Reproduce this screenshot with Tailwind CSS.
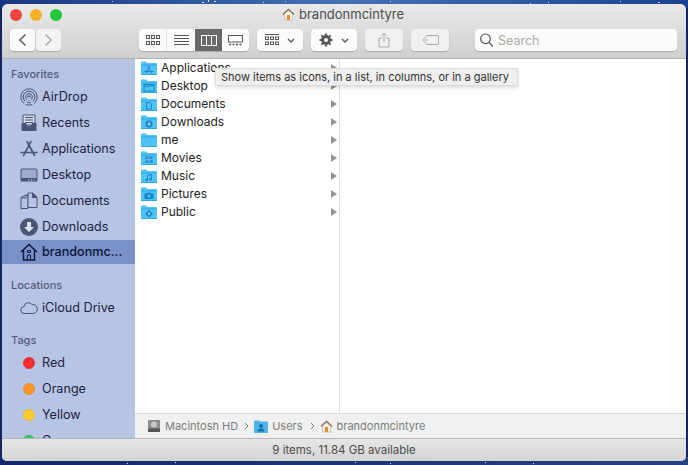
<!DOCTYPE html>
<html lang="en">
<head>
    <meta charset="UTF-8">
    <title>brandonmcintyre</title>
    <script src="https://cdn.jsdelivr.net/npm/@tailwindcss/browser@4"></script>
</head>
<body class="relative w-[688px] h-[465px] overflow-hidden bg-[#13265f] pt-[4px] px-[2px] font-['Inter','Liberation_Sans',sans-serif]">

    <!-- wallpaper showing round the window -->
    <div class="absolute left-0 top-0 w-full h-[8px] bg-gradient-to-r from-[#1a3580] via-[#4573b2] to-[#1c3f92]"></div>
    <div class="absolute left-0 bottom-0 w-full h-[8px] bg-gradient-to-r from-[#13286a] to-[#25427f]"></div>
    <svg class="absolute left-0 top-0" width="688" height="465" viewBox="0 0 688 465" fill="#dfe8f8">
        <rect x="112" y="1" width="1" height="1"/><rect x="202" y="2" width="2" height="1"/><rect x="208" y="0" width="1" height="2"/><rect x="214" y="1" width="2" height="1"/><rect x="263" y="2" width="1" height="1"/><rect x="285" y="1" width="1" height="1"/><rect x="390" y="1" width="1" height="1"/><rect x="530" y="3" width="1" height="1"/><rect x="548" y="2" width="1" height="1"/><rect x="620" y="1" width="1" height="1"/><rect x="658" y="2" width="2" height="1"/>
        <rect x="127" y="463" width="1" height="1"/><rect x="175" y="462" width="1" height="1"/><rect x="355" y="462" width="1" height="1"/><rect x="390" y="463" width="1" height="1"/><rect x="485" y="462" width="1" height="1"/><rect x="533" y="463" width="1" height="1"/>
    </svg>

    <!-- finder window -->
    <main class="relative w-[684px] h-[457px] rounded-t-[6px] rounded-b-[5px] overflow-hidden flex flex-col bg-white">

        <!-- title + toolbar -->
        <header class="h-[55px] shrink-0 bg-gradient-to-b from-[#e9e9e9] to-[#d0d0d0] border-b border-[#b1b1b1] px-[8px]">
            <div class="h-[22px] flex items-center relative">
                <div class="flex gap-[8px]">
                    <span class="w-[12px] h-[12px] rounded-full bg-[#f2453f]"></span>
                    <span class="w-[12px] h-[12px] rounded-full bg-[#f6b226]"></span>
                    <span class="w-[12px] h-[12px] rounded-full bg-[#22c93a]"></span>
                </div>
                <div class="absolute left-[272px] top-[1px] flex items-center gap-[4px] text-[13px] text-[#4d4d4d]">
                    <svg width="13" height="13" viewBox="0 0 13 13"><path d="M1 6.500 6.500 1.500 12 6.500" fill="none" stroke="#8a6a4a" stroke-width="1.400"/><path d="M2.500 6 6.500 2.600 10.500 6V12H2.500Z" fill="#f4f1ec" stroke="#a9a49c" stroke-width=".5"/><rect x="5" y="7" width="3" height="5" fill="#ef8a1d"/></svg>
                    <span>brandonmcintyre</span>
                </div>
            </div>
            <div class="mt-[3px] h-[22px] flex text-[#4b4b4b]">
                <div class="flex gap-[1px]">
                    <button class="w-[25px] h-[22px] rounded-[4px] bg-[#fbfbfb] shadow-[0_1px_1px_#0003] flex items-center justify-center">
                        <svg width="9" height="14" viewBox="0 0 9 14"><path d="M7.500 1.500 1.800 7l5.700 5.500" fill="none" stroke="#555" stroke-width="1.400"/></svg>
                    </button>
                    <button class="w-[25px] h-[22px] rounded-[4px] bg-[#f3f3f3] shadow-[0_1px_1px_#0003] flex items-center justify-center">
                        <svg width="9" height="14" viewBox="0 0 9 14"><path d="M1.500 1.500 7.200 7l-5.700 5.500" fill="none" stroke="#aaa" stroke-width="1.400"/></svg>
                    </button>
                </div>
                <div class="ml-[78px] flex w-[110px] h-[22px] rounded-[4px] overflow-hidden bg-[#fbfbfb] shadow-[0_1px_1px_#0003]">
                    <div class="w-[28px] flex items-center justify-center border-r border-[#e2e2e2]">
                        <svg width="14" height="10" viewBox="0 0 14 10" fill="none" stroke="#555"><rect x=".5" y=".5" width="3" height="3"/><rect x="5.500" y=".5" width="3" height="3"/><rect x="10.500" y=".5" width="3" height="3"/><rect x=".5" y="6.500" width="3" height="3"/><rect x="5.500" y="6.500" width="3" height="3"/><rect x="10.500" y="6.500" width="3" height="3"/></svg>
                    </div>
                    <div class="w-[28px] flex items-center justify-center">
                        <svg width="15" height="11" viewBox="0 0 15 11" stroke="#555"><path d="M0 .5h15M0 3.500h15M0 6.500h15M0 9.500h15"/></svg>
                    </div>
                    <div class="w-[27px] flex items-center justify-center bg-[#696969]">
                        <svg width="16" height="11" viewBox="0 0 16 11" fill="none" stroke="#fff"><rect x=".5" y=".5" width="15" height="10"/><path d="M5.500 0v11M10.500 0v11"/></svg>
                    </div>
                    <div class="w-[27px] flex items-center justify-center">
                        <svg width="15" height="11" viewBox="0 0 15 11" fill="none" stroke="#555"><rect x=".5" y=".5" width="14" height="6.500"/><path d="M1 9.500h2M4.500 9.500h2M8 9.500h2M11.500 9.500h2" stroke-width="1.400"/></svg>
                    </div>
                </div>
                <button class="ml-[8px] w-[46px] h-[22px] rounded-[4px] bg-[#fbfbfb] shadow-[0_1px_1px_#0003] flex items-center justify-center gap-[8px]">
                    <svg width="14" height="12" viewBox="0 0 14 12" fill="none" stroke="#555"><path d="M0 .5h14"/><rect x=".5" y="3" width="3" height="2.500"/><rect x="5.500" y="3" width="3" height="2.500"/><rect x="10.500" y="3" width="3" height="2.500"/><rect x=".5" y="8" width="3" height="2.500"/><rect x="5.500" y="8" width="3" height="2.500"/><rect x="10.500" y="8" width="3" height="2.500"/></svg>
                    <svg width="8" height="5" viewBox="0 0 8 5"><path d="M1 1l3 3 3-3" fill="none" stroke="#555" stroke-width="1.300"/></svg>
                </button>
                <button class="ml-[8px] w-[46px] h-[22px] rounded-[4px] bg-[#fbfbfb] shadow-[0_1px_1px_#0003] flex items-center justify-center gap-[8px]">
                    <svg width="14" height="14" viewBox="0 0 14 14"><circle cx="7" cy="7" r="3.600" fill="none" stroke="#555" stroke-width="2.600"/><path d="M7 .5v13M.5 7h13M2.400 2.400l9.200 9.200M11.600 2.400l-9.200 9.200" stroke="#555" stroke-width="2"/><circle cx="7" cy="7" r="2" fill="#fbfbfb"/></svg>
                    <svg width="8" height="5" viewBox="0 0 8 5"><path d="M1 1l3 3 3-3" fill="none" stroke="#555" stroke-width="1.300"/></svg>
                </button>
                <button class="ml-[8px] w-[38px] h-[22px] rounded-[4px] bg-[#f1f1f1] shadow-[0_1px_1px_#0003] flex items-center justify-center">
                    <svg width="12" height="16" viewBox="0 0 12 16" fill="none" stroke="#a8a8a8"><path d="M6 10V1M3.500 3.500 6 1l2.500 2.500M4 6H1v9h10V6H8"/></svg>
                </button>
                <button class="ml-[8px] w-[38px] h-[22px] rounded-[4px] bg-[#f1f1f1] shadow-[0_1px_1px_#0003] flex items-center justify-center">
                    <svg width="17" height="10" viewBox="0 0 17 10" fill="none" stroke="#a8a8a8"><path d="M5 .5h10.500a1 1 0 0 1 1 1v7a1 1 0 0 1-1 1H5L.8 5Z"/><circle cx="4.500" cy="5" r=".6"/></svg>
                </button>
                <div class="ml-[26px] w-[202px] h-[22px] rounded-[4px] bg-[#fbfbfb] shadow-[0_1px_1px_#0003] flex items-center pl-[5px] gap-[5px] text-[12.500px] text-[#a9a9a9]">
                    <svg width="13" height="14" viewBox="0 0 13 14" fill="none" stroke="#555" stroke-width="1.200"><circle cx="5.500" cy="5.800" r="4.800"/><path d="M9 9.200 12.800 13.500"/></svg>
                    <span class="pt-[2px]">Search</span>
                </div>
            </div>
        </header>

        <div class="flex-1 min-h-0 flex">
            <!-- sidebar -->
            <aside class="w-[133px] shrink-0 bg-[#b8c4e3] text-[12.600px] text-[#1a2342] overflow-hidden relative">
                <h2 class="mt-[8px] ml-[9px] h-[14px] leading-[14px] text-[11px] font-medium text-[#525c7d]">Favorites</h2>
                <ul class="mt-[3px]">
                    <li class="h-[26px] flex items-center pl-[18px] gap-[4px]">
                        <svg class="w-[18px] h-[18px]" viewBox="0 0 18 18" fill="none" stroke="#4a5474"><circle cx="9" cy="9" r="8.200"/><circle cx="9" cy="9" r="5.800"/><circle cx="9" cy="9" r="3.400"/><circle cx="9" cy="9" r="1.200" fill="#4a5474"/><path d="M4 17 9 10l5 7" stroke="#b8c4e3" stroke-width="2"/></svg>
                        <span>AirDrop</span>
                    </li>
                    <li class="h-[26px] flex items-center pl-[18px] gap-[4px]">
                        <svg class="w-[18px] h-[18px]" viewBox="0 0 18 18"><path d="M3 1h12v10H3Z" fill="#d5daea" stroke="#4a5474"/><path d="M5 3.500h8M5 6h8M5 8.500h8" stroke="#4a5474"/><path d="M1.500 9H6a3 3 0 0 0 6 0h4.500v7a1 1 0 0 1-1 1h-13a1 1 0 0 1-1-1Z" fill="#4a5474"/></svg>
                        <span>Recents</span>
                    </li>
                    <li class="h-[26px] flex items-center pl-[18px] gap-[4px]">
                        <svg class="w-[18px] h-[18px]" viewBox="0 0 18 18" fill="none" stroke="#4a5474" stroke-width="1.600" stroke-linecap="round"><path d="M11 1.500 3.500 15.500M7 1.500 14.500 15.500M1 12.500h16"/></svg>
                        <span>Applications</span>
                    </li>
                    <li class="h-[26px] flex items-center pl-[18px] gap-[4px]">
                        <svg class="w-[18px] h-[18px]" viewBox="0 0 18 18"><rect x=".5" y="2.500" width="17" height="13" rx="1.500" fill="#4a5474"/><rect x="1.500" y="3.500" width="15" height="8.500" fill="#a0abc9"/><path d="M8.500 14h1M11 14h1M13.500 14h1" stroke="#d5daea"/></svg>
                        <span>Desktop</span>
                    </li>
                    <li class="h-[26px] flex items-center pl-[18px] gap-[4px]">
                        <svg class="w-[18px] h-[18px]" viewBox="0 0 18 18" fill="none" stroke="#4a5474"><path d="M1 5.500 6 3h2v13.500H1ZM6 3v3H1"/><path d="M8 1h5l4 4v10.500H8Z" fill="#b8c4e3"/><path d="M12.500 1v4.500H17" fill="#4a5474"/></svg>
                        <span>Documents</span>
                    </li>
                    <li class="h-[26px] flex items-center pl-[18px] gap-[4px]">
                        <svg class="w-[18px] h-[18px]" viewBox="0 0 18 18"><circle cx="9" cy="9" r="9" fill="#4a5474"/><path d="M7 4h4v5h3l-5 5-5-5h3Z" fill="#dfe4f2"/></svg>
                        <span>Downloads</span>
                    </li>
                    <li class="h-[24px] mb-[2px] flex items-center pl-[18px] gap-[4px] bg-[#7a90c8] text-[#0d1533] font-medium">
                        <svg class="w-[18px] h-[18px]" viewBox="0 0 18 18" fill="none" stroke="#0f1a3c" stroke-width="1.500"><path d="M1 9 9 1.500 17 9M3.500 7.500V17h11V7.500"/><path d="M7.500 17v-5h3v5M7.500 7.500h3v2h-3Z" stroke-width="1"/></svg>
                        <span>brandonmc...</span>
                    </li>
                </ul>
                <h2 class="mt-[14px] ml-[9px] h-[14px] leading-[14px] text-[11px] font-medium text-[#525c7d]">Locations</h2>
                <ul class="mt-[3px]">
                    <li class="h-[26px] flex items-center pl-[18px] gap-[4px]">
                        <svg class="w-[18px] h-[18px]" viewBox="0 0 18 18" fill="none" stroke="#4a5474"><path d="M4.500 14.500a3.500 3.500 0 0 1-.5-7A4.500 4.500 0 0 1 12 5.500a4.500 4.500 0 0 1 1.500 9Z"/></svg>
                        <span>iCloud Drive</span>
                    </li>
                </ul>
                <h2 class="mt-[12px] ml-[9px] h-[14px] leading-[14px] text-[11px] font-medium text-[#525c7d]">Tags</h2>
                <ul class="mt-[3px]">
                    <li class="h-[26px] flex items-center pl-[21px] gap-[7px]"><span class="w-[12px] h-[12px] rounded-full bg-[#fb2b2e] border border-[#e0383e]"></span>Red</li>
                    <li class="h-[26px] flex items-center pl-[21px] gap-[7px]"><span class="w-[12px] h-[12px] rounded-full bg-[#fd9426] border border-[#e69138]"></span>Orange</li>
                    <li class="h-[26px] flex items-center pl-[21px] gap-[7px]"><span class="w-[12px] h-[12px] rounded-full bg-[#fecb2e] border border-[#e6b92e]"></span>Yellow</li>
                    <li class="h-[26px] flex items-center pl-[21px] gap-[7px]"><span class="w-[12px] h-[12px] rounded-full bg-[#2ed158] border border-[#2cb850]"></span>Green</li>
                </ul>
            </aside>

            <!-- columns -->
            <section class="flex-1 min-w-0 flex flex-col relative">
                <div class="flex-1 min-h-0 flex">
                    <ul class="w-[205px] shrink-0 border-r border-[#dfdfdf] text-[12px] text-[#222]">
                        <li class="h-[18px] flex items-center pl-[6px] gap-[4px]"><svg class="w-[16px] h-[14px]" viewBox="0 0 16 14"><path d="M0 1.500a1 1 0 0 1 1-1h4l1.500 1.500H15a1 1 0 0 1 1 1V13a1 1 0 0 1-1 1H1a1 1 0 0 1-1-1Z" fill="#4fc3f7"/><path d="M0 4h16" stroke="#1f9ce0" stroke-width=".7"/><path d="M0 13.600h16" stroke="#1f9ce0" stroke-width=".8"/><path d="M8.500 5 5 12M7 5l3.500 7M3.500 10.500h9" stroke="#1b86cc" fill="none"/></svg><span class="flex-1">Applications</span><i class="mr-[2px] w-0 h-0 border-y-[4px] border-y-transparent border-l-[6px] border-l-[#949494]"></i></li>
                        <li class="h-[18px] flex items-center pl-[6px] gap-[4px]"><svg class="w-[16px] h-[14px]" viewBox="0 0 16 14"><path d="M0 1.500a1 1 0 0 1 1-1h4l1.500 1.500H15a1 1 0 0 1 1 1V13a1 1 0 0 1-1 1H1a1 1 0 0 1-1-1Z" fill="#4fc3f7"/><path d="M0 4h16" stroke="#1f9ce0" stroke-width=".7"/><path d="M0 13.600h16" stroke="#1f9ce0" stroke-width=".8"/><rect x="3" y="5.500" width="10" height="6.500" fill="none" stroke="#1b86cc"/><path d="M3 7h10" stroke="#1b86cc"/></svg><span class="flex-1">Desktop</span><i class="mr-[2px] w-0 h-0 border-y-[4px] border-y-transparent border-l-[6px] border-l-[#949494]"></i></li>
                        <li class="h-[18px] flex items-center pl-[6px] gap-[4px]"><svg class="w-[16px] h-[14px]" viewBox="0 0 16 14"><path d="M0 1.500a1 1 0 0 1 1-1h4l1.500 1.500H15a1 1 0 0 1 1 1V13a1 1 0 0 1-1 1H1a1 1 0 0 1-1-1Z" fill="#4fc3f7"/><path d="M0 4h16" stroke="#1f9ce0" stroke-width=".7"/><path d="M0 13.600h16" stroke="#1f9ce0" stroke-width=".8"/><path d="M5.500 5.500h3.500l1.500 1.500v5h-5Z" fill="none" stroke="#1b86cc"/></svg><span class="flex-1">Documents</span><i class="mr-[2px] w-0 h-0 border-y-[4px] border-y-transparent border-l-[6px] border-l-[#949494]"></i></li>
                        <li class="h-[18px] flex items-center pl-[6px] gap-[4px]"><svg class="w-[16px] h-[14px]" viewBox="0 0 16 14"><path d="M0 1.500a1 1 0 0 1 1-1h4l1.500 1.500H15a1 1 0 0 1 1 1V13a1 1 0 0 1-1 1H1a1 1 0 0 1-1-1Z" fill="#4fc3f7"/><path d="M0 4h16" stroke="#1f9ce0" stroke-width=".7"/><path d="M0 13.600h16" stroke="#1f9ce0" stroke-width=".8"/><circle cx="8" cy="8.800" r="3.600" fill="#1b86cc"/><path d="M8 6.500v3.500M6.500 8.800 8 10.300 9.500 8.800" stroke="#c6eefe" fill="none"/></svg><span class="flex-1">Downloads</span><i class="mr-[2px] w-0 h-0 border-y-[4px] border-y-transparent border-l-[6px] border-l-[#949494]"></i></li>
                        <li class="h-[18px] flex items-center pl-[6px] gap-[4px]"><svg class="w-[16px] h-[14px]" viewBox="0 0 16 14"><path d="M0 1.500a1 1 0 0 1 1-1h4l1.500 1.500H15a1 1 0 0 1 1 1V13a1 1 0 0 1-1 1H1a1 1 0 0 1-1-1Z" fill="#4fc3f7"/><path d="M0 4h16" stroke="#1f9ce0" stroke-width=".7"/><path d="M0 13.600h16" stroke="#1f9ce0" stroke-width=".8"/></svg><span class="flex-1">me</span><i class="mr-[2px] w-0 h-0 border-y-[4px] border-y-transparent border-l-[6px] border-l-[#949494]"></i></li>
                        <li class="h-[18px] flex items-center pl-[6px] gap-[4px]"><svg class="w-[16px] h-[14px]" viewBox="0 0 16 14"><path d="M0 1.500a1 1 0 0 1 1-1h4l1.500 1.500H15a1 1 0 0 1 1 1V13a1 1 0 0 1-1 1H1a1 1 0 0 1-1-1Z" fill="#4fc3f7"/><path d="M0 4h16" stroke="#1f9ce0" stroke-width=".7"/><path d="M0 13.600h16" stroke="#1f9ce0" stroke-width=".8"/><rect x="4.500" y="5.500" width="7" height="6.500" fill="#1b86cc"/><path d="M7 5.500v6.500M9 5.500v6.500M4.500 8.700h7" stroke="#8edcfc" stroke-width=".6"/></svg><span class="flex-1">Movies</span><i class="mr-[2px] w-0 h-0 border-y-[4px] border-y-transparent border-l-[6px] border-l-[#949494]"></i></li>
                        <li class="h-[18px] flex items-center pl-[6px] gap-[4px]"><svg class="w-[16px] h-[14px]" viewBox="0 0 16 14"><path d="M0 1.500a1 1 0 0 1 1-1h4l1.500 1.500H15a1 1 0 0 1 1 1V13a1 1 0 0 1-1 1H1a1 1 0 0 1-1-1Z" fill="#4fc3f7"/><path d="M0 4h16" stroke="#1f9ce0" stroke-width=".7"/><path d="M0 13.600h16" stroke="#1f9ce0" stroke-width=".8"/><path d="M6.500 11V6.200l4-.7V10" fill="none" stroke="#1b86cc"/><circle cx="5.500" cy="11" r="1.200" fill="#1b86cc"/><circle cx="9.500" cy="10.200" r="1.200" fill="#1b86cc"/></svg><span class="flex-1">Music</span><i class="mr-[2px] w-0 h-0 border-y-[4px] border-y-transparent border-l-[6px] border-l-[#949494]"></i></li>
                        <li class="h-[18px] flex items-center pl-[6px] gap-[4px]"><svg class="w-[16px] h-[14px]" viewBox="0 0 16 14"><path d="M0 1.500a1 1 0 0 1 1-1h4l1.500 1.500H15a1 1 0 0 1 1 1V13a1 1 0 0 1-1 1H1a1 1 0 0 1-1-1Z" fill="#4fc3f7"/><path d="M0 4h16" stroke="#1f9ce0" stroke-width=".7"/><path d="M0 13.600h16" stroke="#1f9ce0" stroke-width=".8"/><path d="M3.500 6.500h2.500l1-1h2.500l1 1h2v5.500h-9Z" fill="#1b86cc"/><circle cx="8" cy="9" r="1.600" fill="#4fc3f7"/></svg><span class="flex-1">Pictures</span><i class="mr-[2px] w-0 h-0 border-y-[4px] border-y-transparent border-l-[6px] border-l-[#949494]"></i></li>
                        <li class="h-[18px] flex items-center pl-[6px] gap-[4px]"><svg class="w-[16px] h-[14px]" viewBox="0 0 16 14"><path d="M0 1.500a1 1 0 0 1 1-1h4l1.500 1.500H15a1 1 0 0 1 1 1V13a1 1 0 0 1-1 1H1a1 1 0 0 1-1-1Z" fill="#4fc3f7"/><path d="M0 4h16" stroke="#1f9ce0" stroke-width=".7"/><path d="M0 13.600h16" stroke="#1f9ce0" stroke-width=".8"/><path d="M8 5l4 3.800-4 3.800-4-3.800Z" fill="#1b86cc"/><circle cx="8" cy="8.800" r="1.200" fill="#8edcfc"/></svg><span class="flex-1">Public</span><i class="mr-[2px] w-0 h-0 border-y-[4px] border-y-transparent border-l-[6px] border-l-[#949494]"></i></li>
                    </ul>
                    <div class="flex-1"></div>
                </div>
                <!-- path bar -->
                <div class="h-[25px] shrink-0 bg-[#f0f0f0] border-t border-[#d9d9d9] flex items-center pl-[12px] text-[11px] text-[#7c7c7c]">
                    <svg class="w-[14px] h-[14px] mr-[4px]" viewBox="0 0 14 14"><rect x="1" y="1" width="12" height="12" rx="1" fill="#8d8d8d"/><rect x="1" y="9.500" width="12" height="3.500" fill="#555"/><circle cx="7" cy="5.500" r="3" fill="#c9c9c9"/></svg>
                    <span>Macintosh HD</span>
                    <svg class="ml-[6px] mr-[5px]" width="5" height="8" viewBox="0 0 5 8"><path d="M1 1l3 3-3 3" fill="none" stroke="#777"/></svg>
                    <svg class="w-[14px] h-[13px] mr-[4px]" viewBox="0 0 14 13"><path d="M0 1.500a1 1 0 0 1 1-1h4l1 1h7a1 1 0 0 1 1 1V12a1 1 0 0 1-1 1H1a1 1 0 0 1-1-1Z" fill="#4db4ec"/><circle cx="7" cy="6" r="2" fill="#176fa8"/><path d="M3.500 11.500a3.500 3 0 0 1 7 0Z" fill="#176fa8"/></svg>
                    <span>Users</span>
                    <svg class="ml-[7px] mr-[5px]" width="5" height="8" viewBox="0 0 5 8"><path d="M1 1l3 3-3 3" fill="none" stroke="#777"/></svg>
                    <svg class="w-[13px] h-[13px] mr-[4px]" viewBox="0 0 13 13"><path d="M1 6.500 6.500 1.500 12 6.500" fill="none" stroke="#8a6a4a" stroke-width="1.400"/><path d="M2.500 6 6.500 2.600 10.500 6V12H2.500Z" fill="#f4f1ec" stroke="#a9a49c" stroke-width=".5"/><rect x="5" y="7" width="3" height="5" fill="#ef8a1d"/></svg>
                    <span>brandonmcintyre</span>
                </div>
            </section>
        </div>

        <!-- status bar, spans the sidebar too -->
        <footer class="h-[23px] shrink-0 bg-gradient-to-b from-[#e6e6e6] to-[#d4d4d4] border-t border-[#b5b5b5] flex items-center justify-center pt-[2px] text-[11.500px] text-[#4d4d4d]">9 items, 11.84 GB available</footer>
    </main>

    <!-- tooltip -->
    <div class="absolute left-[215px] top-[68px] w-[303px] h-[18px] bg-[#efefef] border border-[#dcdcdc] shadow-[0_2px_4px_#0002] flex items-center pl-[5px] text-[11px] text-[#333] whitespace-nowrap">Show items as icons, in a list, in columns, or in a gallery</div>
</body>
</html>
